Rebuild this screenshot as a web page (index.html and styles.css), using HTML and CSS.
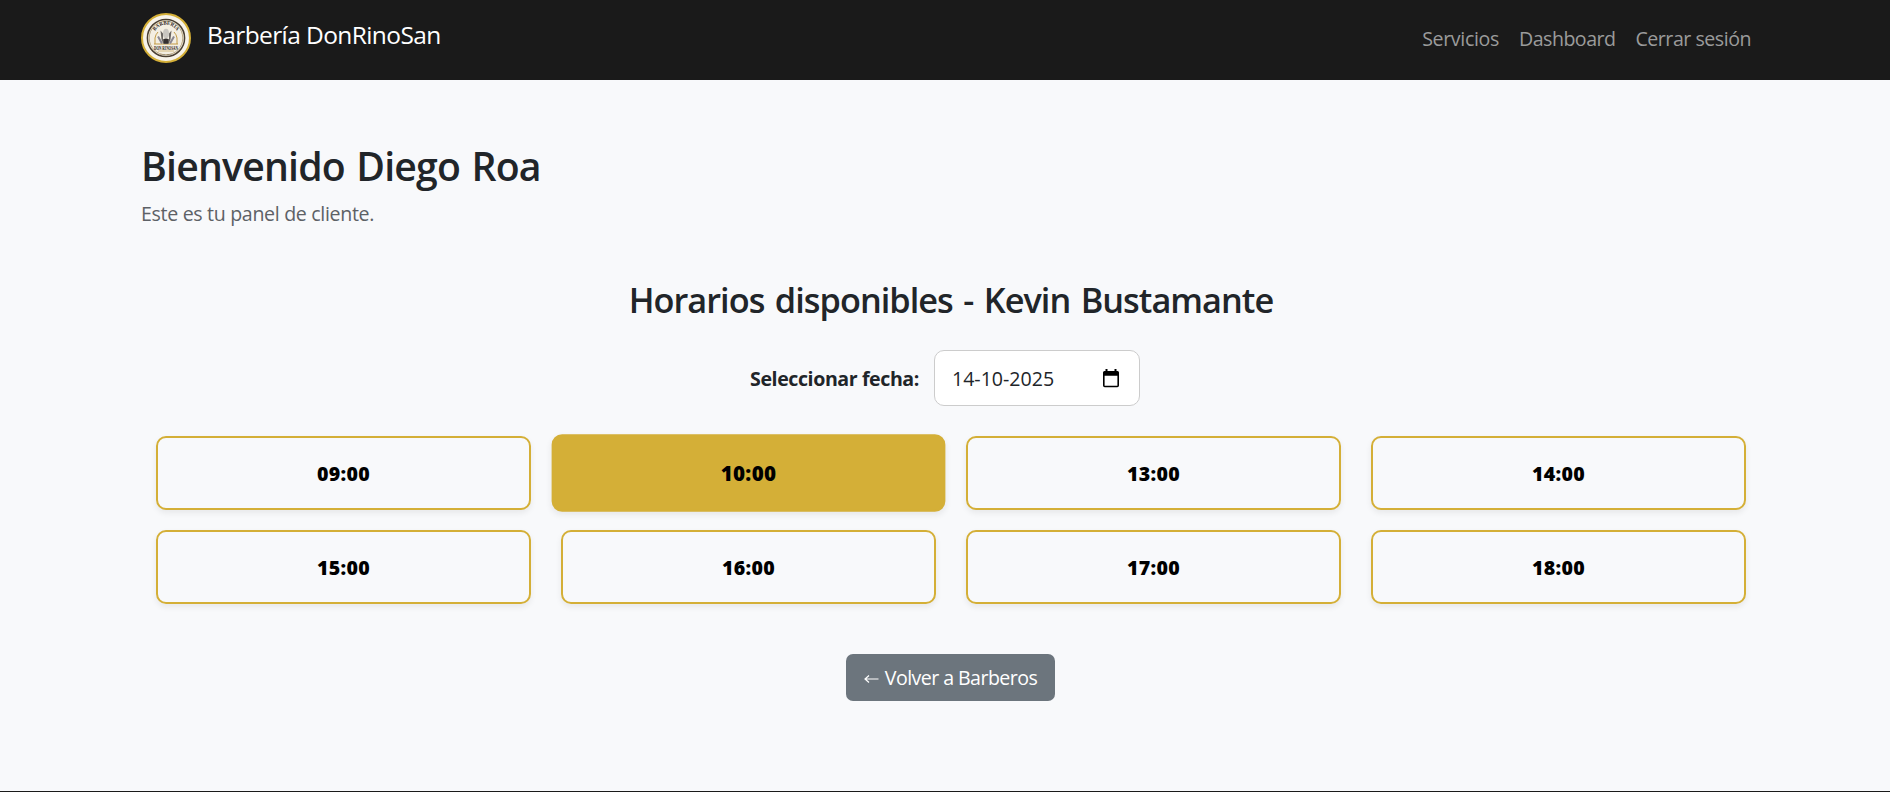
FILE: index.html
```
<!DOCTYPE html>
<html lang="es">
<head>
<meta charset="utf-8">
<title>Barbería DonRinoSan</title>
<link rel="stylesheet" href="styles.css">
</head>
<body>
<header class="navbar">
  <a class="brand">
    <svg class="logo" viewBox="0 0 50 50">
      <circle cx="25" cy="25" r="24" fill="#f7f3ea" stroke="#d4af37" stroke-width="2"/>
      <circle cx="25" cy="25" r="18.600" fill="#f3eee2" stroke="#4a3f31" stroke-width="1.500"/>
      <circle cx="25" cy="25" r="16.800" fill="none" stroke="#a8946b" stroke-width=".8"/>
      <path id="arc" d="M12.900 21a12.500 12.500 0 0 1 24.200 0" fill="none"/>
      <text class="logo-arc"><textPath href="#arc" startOffset="50%" text-anchor="middle">BARBERIA</textPath></text>
      <path d="M14 31V25a11 11 0 0 1 3-6M36 31V25a11 11 0 0 0-3-6M13 31h24" fill="none" stroke="#c39b45" stroke-width="1"/>
      <path d="M17 23.500l4 7M33 23.500l-4 7" stroke="#8a8790" stroke-width="2"/>
      <path d="M19.500 17.500l2.500 3v7q3 4 6 0v-7l2.500-3-1 9-2 4.500h-5l-2-4.500z" fill="#6b6763"/>
      <ellipse cx="25" cy="20.500" rx="3" ry="4.800" fill="#c9c6c0"/>
      <path d="M22 26.500q3-2 6 0l-1 4h-4z" fill="#34302f"/>
      <text class="logo-name" x="25" y="36.600" text-anchor="middle" textLength="24" lengthAdjust="spacingAndGlyphs">DON RINOSAN</text>
      <path d="M17 38h16" stroke="#c39b45" stroke-width=".6"/>
      <text class="logo-year" x="25" y="41.500" text-anchor="middle">EST. 2021</text>
    </svg>
    <span class="brand-name">Barbería DonRinoSan</span>
  </a>
  <nav class="links">
    <a class="link-services">Servicios</a>
    <a class="link-dashboard">Dashboard</a>
    <a class="link-logout">Cerrar sesión</a>
  </nav>
</header>
<main class="content">
  <h1>Bienvenido Diego Roa</h1>
  <p class="lead">Este es tu panel de cliente.</p>
  <h2>Horarios disponibles - Kevin Bustamante</h2>
  <div class="date-row">
    <span class="date-label">Seleccionar fecha:</span>
    <div class="date-input">
      <span class="date-value">14-10-2025</span>
      <svg class="calendar" viewBox="0 0 16 19"><path fill="#000" fill-rule="evenodd" d="M2.500 0h2v2h7V0h2v2h1Q16 2 16 3.500v13Q16 18.300 14.300 18.300H1.700Q0 18.300 0 16.500v-13Q0 2 1.500 2h1zM1.600 6.700v10h12.800v-10z"/></svg>
    </div>
  </div>
  <div class="slots">
    <div class="slot">09:00</div>
    <div class="slot selected">10:00</div>
    <div class="slot">13:00</div>
    <div class="slot">14:00</div>
    <div class="slot">15:00</div>
    <div class="slot">16:00</div>
    <div class="slot">17:00</div>
    <div class="slot">18:00</div>
  </div>
  <a class="back"><svg class="arrow" viewBox="0 0 15 10"><path d="M14.500 5H1M5 1.500L1 5l4 3.500" fill="none" stroke="#fff" stroke-width="1.200"/></svg><span class="back-label">Volver a Barberos</span></a>
</main>
<footer class="footer"></footer>
</body>
</html>
```
FILE: styles.css
```
* { box-sizing: border-box; }
body { margin: 0; height: 792px; overflow: hidden; display: flex; flex-direction: column; background: #f8f9fb; color: #212529; font-family: "Open Sans", "Noto Sans", sans-serif; font-size: 19.600px; line-height: 30px; }
.navbar { flex: none; height: 80px; padding: 0 139px 0 141px; display: flex; align-items: center; justify-content: space-between; background: #1a1a1a; }
.brand { display: flex; gap: 16px; padding-bottom: 5px; color: #fff; font-size: 24.500px; }
.logo { width: 50px; height: 50px; display: block; overflow: visible; }
.logo-arc { font: 700 5px "Liberation Serif", serif; fill: #2c241d; }
.logo-name { font: 700 6px "Liberation Serif", serif; fill: #1f1916; }
.logo-year { font: 700 2.800px "Liberation Serif", serif; fill: #82735c; }
.brand-name { line-height: 44px; letter-spacing: -.6px; }
.links { display: flex; gap: 20px; padding-bottom: 2px; color: #9b9b9b; }
.link-services { letter-spacing: -.34px; }
.link-dashboard { letter-spacing: -.52px; }
.link-logout { letter-spacing: -.48px; }
.content { flex: 1; width: 1620px; margin-left: 141px; padding-top: 60px; display: flex; flex-direction: column; }
h1 { margin: 0; font-size: 39.200px; font-weight: 600; line-height: 48px; padding-top: 2px; letter-spacing: -.8px; word-spacing: 2px; }
.lead { margin: 9px 0 0; color: #5d6166; line-height: 30px; letter-spacing: -.33px; }
h2 { margin: 50px 0 0; text-align: center; font-size: 34.300px; font-weight: 600; line-height: 42px; letter-spacing: -.97px; word-spacing: 2.500px; }
.date-row { display: flex; justify-content: center; align-items: center; gap: 15px; margin: 29px 12px 0 0; }
.date-label { padding-top: 2px; font-weight: 700; letter-spacing: -.42px; }
.date-value { padding-top: 1px; }
.date-input { width: 206px; height: 56px; padding: 0 20px 0 17px; display: flex; align-items: center; justify-content: space-between; background: #fff; border: 1px solid #ccc; border-radius: 10px; }
.calendar { width: 16px; height: 19px; }
.slots { display: grid; grid-template-columns: repeat(4, 375px); gap: 20px 30px; padding: 0 15px; margin-top: 30px; }
.slot { height: 74px; padding-top: 2px; display: flex; align-items: center; justify-content: center; border: 2px solid #d4af37; border-radius: 10px; box-shadow: 0 3px 6px rgba(0, 0, 0, .07); color: #000; font-size: 19.600px; font-weight: 800; letter-spacing: .3px; }
.selected { background: #d4af37; transform: scale(1.05); }
.back { align-self: center; width: 209px; height: 47px; margin: 50px 1px 0 0; display: flex; align-items: center; justify-content: center; gap: 6px; border-radius: 7px; background: #6c757d; color: #fff; }
.arrow { width: 15px; height: 10px; margin-top: 3px; }
.back-label { letter-spacing: -.56px; }
.footer { flex: none; height: 1px; background: #1a1a1a; }
```
